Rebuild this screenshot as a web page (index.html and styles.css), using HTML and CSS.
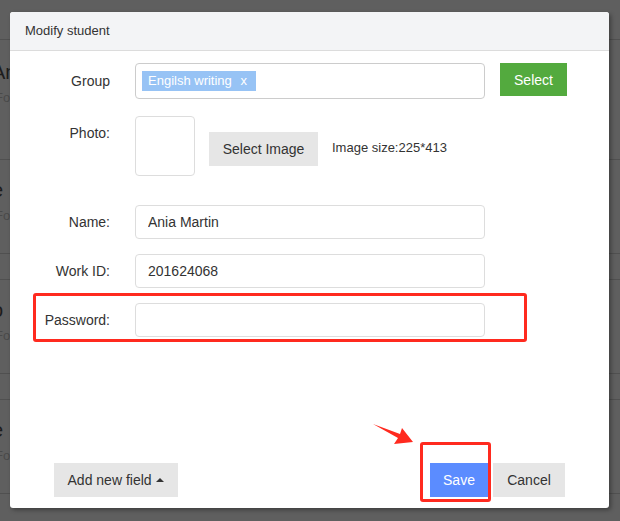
FILE: index.html
```html
<!DOCTYPE html>
<html lang="en">
<head>
  <meta charset="UTF-8">
  <title>Modify student</title>
  <link rel="stylesheet" href="styles.css">
</head>
<body>
  <div class="page">
    <div class="seg seg-top"></div>
    <div class="seg seg-item"><div class="item-title">Ana</div><div class="item-sub">For</div></div>
    <div class="seg seg-item seg-short"><div class="item-title">e</div><div class="item-sub">For</div></div>
    <div class="seg seg-gap"></div>
    <div class="seg seg-item seg-short"><div class="item-title">o</div><div class="item-sub">For</div></div>
    <div class="seg seg-gap"></div>
    <div class="seg seg-item seg-short"><div class="item-title">e</div><div class="item-sub">For</div></div>
  </div>

  <div class="modal">
    <div class="modal-header">Modify student</div>
    <div class="modal-body">
      <div class="form-row row-group">
        <label class="form-label">Group</label>
        <div class="tag-input">
          <span class="tag">Engilsh writing <span class="tag-x">x</span></span>
        </div>
        <button class="btn btn-green">Select</button>
      </div>
      <div class="form-row row-photo">
        <label class="form-label label-top">Photo:</label>
        <div class="photo-box"></div>
        <button class="btn btn-gray btn-image">Select Image</button>
        <span class="hint">Image size:225*413</span>
      </div>
      <div class="form-row row-name">
        <label class="form-label">Name:</label>
        <input class="text-input" type="text" value="Ania Martin">
      </div>
      <div class="form-row row-next">
        <label class="form-label">Work ID:</label>
        <input class="text-input" type="text" value="201624068">
      </div>
      <div class="form-row row-next">
        <label class="form-label">Password:</label>
        <input class="text-input" type="password">
      </div>
    </div>
    <div class="modal-footer">
      <button class="btn btn-gray btn-add">Add new field <span class="caret"></span></button>
      <div class="footer-right">
        <button class="btn btn-blue btn-save">Save</button>
        <button class="btn btn-gray btn-cancel">Cancel</button>
      </div>
    </div>

    <!-- annotations -->
    <div class="mark mark-password"></div>
    <div class="mark mark-save"></div>
  </div>

  <svg class="arrow" width="620" height="521" viewBox="0 0 620 521">
    <polygon points="373,424 400,434 402,428 413,442 394,444 398,438" fill="#ff2a1f"/>
  </svg>
</body>
</html>
```

FILE: styles.css
```css
body {
  margin: 0;
  width: 620px;
  height: 521px;
  overflow: hidden;
  background-color: #5f5f5f;
  font-family: "Liberation Sans", Arial, sans-serif;
  font-size: 14px;
  color: #333;
  position: relative;
}
.page {
  width: 620px;
}
.seg {
  border-bottom: 1px solid #505050;
  box-sizing: border-box;
}
.seg-top {
  height: 40px;
}
.seg-item {
  height: 120px;
  padding: 20px 0 0 0;
}
.seg-short {
  height: 94px;
  padding-top: 18px;
}
.seg-gap {
  height: 26px;
}
.item-title {
  font-size: 20px;
  color: #1c1c1c;
  margin-left: -8px;
  line-height: 24px;
}
.item-sub {
  font-size: 13px;
  color: #4a4a4a;
  margin-left: -5px;
  margin-top: 6px;
}
.modal {
  position: absolute;
  left: 10px;
  top: 12px;
  width: 599px;
  height: 496px;
  background-color: #fff;
  border-radius: 3px;
  box-shadow: 2px 2px 4px rgba(0,0,0,0.35);
  display: flex;
  flex-direction: column;
}
.modal-header {
  height: 38px;
  line-height: 38px;
  padding-left: 15px;
  font-size: 13px;
  background-color: #f3f4f6;
  border-bottom: 1px solid #dcdcdc;
  border-radius: 3px 3px 0 0;
}
.modal-body {
  flex: 1;
  padding-top: 12px;
}
.form-row {
  display: flex;
  align-items: center;
}
.form-label {
  width: 100px;
  margin-right: 25px;
  text-align: right;
  line-height: 20px;
}
.label-top {
  align-self: flex-start;
  padding-top: 7px;
}
.tag-input {
  width: 350px;
  height: 36px;
  box-sizing: border-box;
  border: 1px solid #ccc;
  border-radius: 4px;
  padding: 7px 6px;
}
.tag {
  display: inline-block;
  background-color: #97c3f5;
  color: #fff;
  font-size: 13px;
  height: 20px;
  line-height: 20px;
  padding: 0 9px 0 6px;
}
.tag-x {
  margin-left: 5px;
}
.btn {
  font-family: "Liberation Sans", Arial, sans-serif;
  font-size: 14px;
  border: none;
  height: 34px;
  padding: 0 14px;
  white-space: nowrap;
  cursor: pointer;
}
.btn-green {
  background-color: #53aa3e;
  color: #fff;
  height: 33px;
  width: 67px;
  padding: 0;
  margin-left: 15px;
  align-self: flex-start;
}
.btn-gray {
  background-color: #e6e6e6;
  color: #333;
}
.btn-blue {
  background-color: #5b8cff;
  color: #fff;
}
.row-photo {
  margin-top: 17px;
}
.photo-box {
  width: 60px;
  height: 60px;
  box-sizing: border-box;
  border: 1px solid #ddd;
  border-radius: 4px;
}
.btn-image {
  width: 109px;
  padding: 0;
  margin-left: 14px;
  margin-top: 6px;
}
.hint {
  margin-left: 14px;
  font-size: 13px;
  margin-top: 2px;
}
.row-name {
  margin-top: 29px;
}
.row-next {
  margin-top: 15px;
}
.text-input {
  width: 350px;
  height: 34px;
  box-sizing: border-box;
  border: 1px solid #ddd;
  border-radius: 4px;
  padding: 0 12px;
  font-family: "Liberation Sans", Arial, sans-serif;
  font-size: 14px;
  color: #333;
  outline: none;
}
.modal-footer {
  display: flex;
  justify-content: space-between;
  padding: 0 44px 11px 44px;
}
.footer-right {
  display: flex;
}
.btn-add {
  width: 124px;
  padding: 0;
}
.caret {
  display: inline-block;
  width: 0;
  height: 0;
  border-left: 4px solid transparent;
  border-right: 4px solid transparent;
  border-bottom: 4px solid #333;
  vertical-align: 3px;
  margin-left: 1px;
}
.btn-save {
  width: 58px;
  padding: 0;
}
.btn-cancel {
  width: 72px;
  padding: 0;
  margin-left: 5px;
}
.mark {
  position: absolute;
  border: 3px solid #ff2a1f;
  border-radius: 3px;
  box-sizing: border-box;
}
.mark-password {
  left: 23px;
  top: 281px;
  width: 494px;
  height: 49px;
}
.mark-save {
  left: 410px;
  top: 430px;
  width: 71px;
  height: 60px;
}
.arrow {
  position: absolute;
  left: 0;
  top: 0;
  pointer-events: none;
}
```
